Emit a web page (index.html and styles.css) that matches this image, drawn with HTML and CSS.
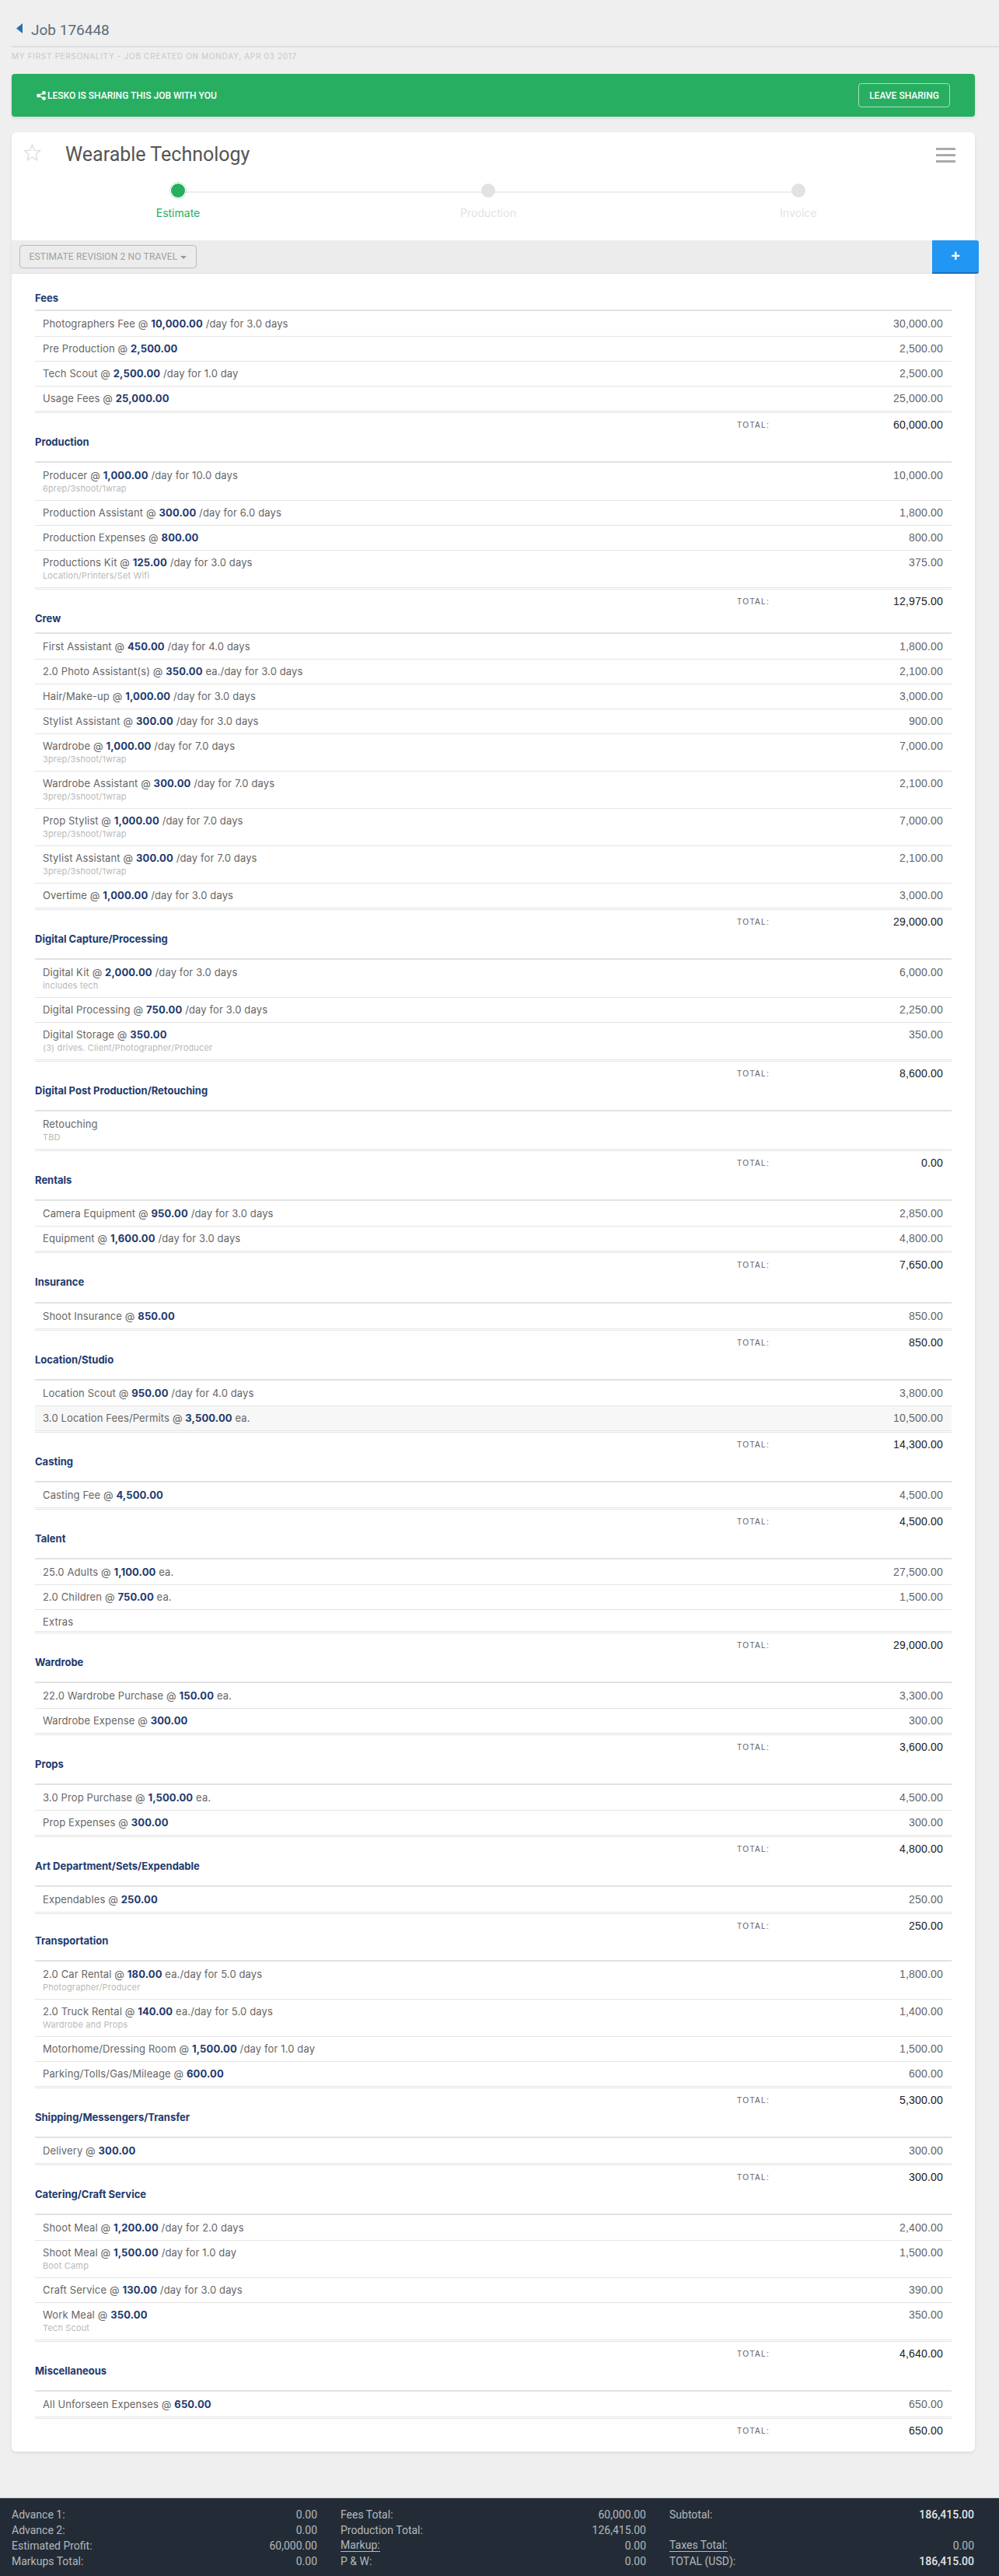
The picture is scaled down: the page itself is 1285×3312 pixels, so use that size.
FILE: index.html
```html
<!DOCTYPE html>
<html lang="en">
  <head>
    <meta charset="UTF-8" />
    <title>Job 176448</title>
    <link rel="stylesheet" href="styles.css">
  </head>
  <body>
    <div class="job-head">
      <svg class="back-arrow" width="8" height="13" viewBox="0 0 8 13"><path d="M8 0 L0 6.5 L8 13 Z" /></svg>
      <span class="job-number">Job 176448</span>
    </div>
    <div class="job-sub">My First Personality - Job created on Monday, Apr 03 2017</div>

    <div class="share-banner">
      <div class="share-text">
        <svg width="12" height="12" viewBox="0 0 12 12"><circle cx="2.5" cy="6" r="2.4" /><circle cx="9.5" cy="2.4" r="2.4" /><circle cx="9.5" cy="9.6" r="2.4" /><path d="M2.5 6 L9.5 2.4 M2.5 6 L9.5 9.6" stroke="#fff" stroke-width="1.4" /></svg>
        <span>LESKO IS SHARING THIS JOB WITH YOU</span>
      </div>
      <button type="button" class="leave-btn">LEAVE SHARING</button>
    </div>

    <div class="card">
      <div class="card-title">
        <svg class="star" width="23" height="22" viewBox="0 0 25 24"><path d="M12.5 1.5 L15.7 9 L23.6 9.6 L17.5 14.8 L19.4 22.6 L12.5 18.4 L5.6 22.6 L7.5 14.8 L1.4 9.6 L9.3 9 Z" /></svg>
        <h1>Wearable Technology</h1>
        <div class="burger"><span></span><span></span><span></span></div>
      </div>

      <div class="steps">
        <div class="step active"><i></i><span>Estimate</span></div>
        <div class="step"><i></i><span>Production</span></div>
        <div class="step"><i></i><span>Invoice</span></div>
      </div>

      <div class="toolbar">
        <button type="button" class="rev-btn">ESTIMATE REVISION 2 NO TRAVEL <b></b></button>
        <button type="button" class="add-btn">+</button>
      </div>

      <div class="estimate">
        <div class="cat cat-first">Fees</div>
        <div class="rows">
          <div class="row"><div class="desc">Photographers Fee @ <b>10,000.00</b> /day for 3.0 days</div><div class="amt">30,000.00</div></div>
          <div class="row"><div class="desc">Pre Production @ <b>2,500.00</b></div><div class="amt">2,500.00</div></div>
          <div class="row"><div class="desc">Tech Scout @ <b>2,500.00</b> /day for 1.0 day</div><div class="amt">2,500.00</div></div>
          <div class="row"><div class="desc">Usage Fees @ <b>25,000.00</b></div><div class="amt">25,000.00</div></div>
        </div>
        <div class="total"><span>TOTAL:</span><strong>60,000.00</strong></div>

        <div class="cat">Production</div>
        <div class="rows">
          <div class="row has-note"><div class="desc">Producer @ <b>1,000.00</b> /day for 10.0 days<small>6prep/3shoot/1wrap</small></div><div class="amt">10,000.00</div></div>
          <div class="row"><div class="desc">Production Assistant @ <b>300.00</b> /day for 6.0 days</div><div class="amt">1,800.00</div></div>
          <div class="row"><div class="desc">Production Expenses @ <b>800.00</b></div><div class="amt">800.00</div></div>
          <div class="row has-note"><div class="desc">Productions Kit @ <b>125.00</b> /day for 3.0 days<small>Location/Printers/Set Wifi</small></div><div class="amt">375.00</div></div>
        </div>
        <div class="total"><span>TOTAL:</span><strong>12,975.00</strong></div>

        <div class="cat cat-short">Crew</div>
        <div class="rows">
          <div class="row"><div class="desc">First Assistant @ <b>450.00</b> /day for 4.0 days</div><div class="amt">1,800.00</div></div>
          <div class="row"><div class="desc">2.0 Photo Assistant(s) @ <b>350.00</b> ea./day for 3.0 days</div><div class="amt">2,100.00</div></div>
          <div class="row"><div class="desc">Hair/Make-up @ <b>1,000.00</b> /day for 3.0 days</div><div class="amt">3,000.00</div></div>
          <div class="row"><div class="desc">Stylist Assistant @ <b>300.00</b> /day for 3.0 days</div><div class="amt">900.00</div></div>
          <div class="row has-note"><div class="desc">Wardrobe @ <b>1,000.00</b> /day for 7.0 days<small>3prep/3shoot/1wrap</small></div><div class="amt">7,000.00</div></div>
          <div class="row has-note"><div class="desc">Wardrobe Assistant @ <b>300.00</b> /day for 7.0 days<small>3prep/3shoot/1wrap</small></div><div class="amt">2,100.00</div></div>
          <div class="row has-note"><div class="desc">Prop Stylist @ <b>1,000.00</b> /day for 7.0 days<small>3prep/3shoot/1wrap</small></div><div class="amt">7,000.00</div></div>
          <div class="row has-note"><div class="desc">Stylist Assistant @ <b>300.00</b> /day for 7.0 days<small>3prep/3shoot/1wrap</small></div><div class="amt">2,100.00</div></div>
          <div class="row"><div class="desc">Overtime @ <b>1,000.00</b> /day for 3.0 days</div><div class="amt">3,000.00</div></div>
        </div>
        <div class="total"><span>TOTAL:</span><strong>29,000.00</strong></div>

        <div class="cat">Digital Capture/Processing</div>
        <div class="rows">
          <div class="row has-note"><div class="desc">Digital Kit @ <b>2,000.00</b> /day for 3.0 days<small>includes tech</small></div><div class="amt">6,000.00</div></div>
          <div class="row"><div class="desc">Digital Processing @ <b>750.00</b> /day for 3.0 days</div><div class="amt">2,250.00</div></div>
          <div class="row has-note"><div class="desc">Digital Storage @ <b>350.00</b><small>(3) drives. Client/Photographer/Producer</small></div><div class="amt">350.00</div></div>
        </div>
        <div class="total"><span>TOTAL:</span><strong>8,600.00</strong></div>

        <div class="cat">Digital Post Production/Retouching</div>
        <div class="rows">
          <div class="row has-note"><div class="desc">Retouching<small>TBD</small></div></div>
        </div>
        <div class="total"><span>TOTAL:</span><strong>0.00</strong></div>

        <div class="cat">Rentals</div>
        <div class="rows">
          <div class="row"><div class="desc">Camera Equipment @ <b>950.00</b> /day for 3.0 days</div><div class="amt">2,850.00</div></div>
          <div class="row"><div class="desc">Equipment @ <b>1,600.00</b> /day for 3.0 days</div><div class="amt">4,800.00</div></div>
        </div>
        <div class="total"><span>TOTAL:</span><strong>7,650.00</strong></div>

        <div class="cat cat-tall">Insurance</div>
        <div class="rows">
          <div class="row"><div class="desc">Shoot Insurance @ <b>850.00</b></div><div class="amt">850.00</div></div>
        </div>
        <div class="total"><span>TOTAL:</span><strong>850.00</strong></div>

        <div class="cat">Location/Studio</div>
        <div class="rows">
          <div class="row"><div class="desc">Location Scout @ <b>950.00</b> /day for 4.0 days</div><div class="amt">3,800.00</div></div>
          <div class="row shaded"><div class="desc">3.0 Location Fees/Permits @ <b>3,500.00</b> ea.</div><div class="amt">10,500.00</div></div>
        </div>
        <div class="total"><span>TOTAL:</span><strong>14,300.00</strong></div>

        <div class="cat">Casting</div>
        <div class="rows">
          <div class="row"><div class="desc">Casting Fee @ <b>4,500.00</b></div><div class="amt">4,500.00</div></div>
        </div>
        <div class="total"><span>TOTAL:</span><strong>4,500.00</strong></div>

        <div class="cat">Talent</div>
        <div class="rows">
          <div class="row"><div class="desc">25.0 Adults @ <b>1,100.00</b> ea.</div><div class="amt">27,500.00</div></div>
          <div class="row"><div class="desc">2.0 Children @ <b>750.00</b> ea.</div><div class="amt">1,500.00</div></div>
          <div class="row row-short"><div class="desc">Extras</div></div>
        </div>
        <div class="total"><span>TOTAL:</span><strong>29,000.00</strong></div>

        <div class="cat">Wardrobe</div>
        <div class="rows">
          <div class="row"><div class="desc">22.0 Wardrobe Purchase @ <b>150.00</b> ea.</div><div class="amt">3,300.00</div></div>
          <div class="row"><div class="desc">Wardrobe Expense @ <b>300.00</b></div><div class="amt">300.00</div></div>
        </div>
        <div class="total"><span>TOTAL:</span><strong>3,600.00</strong></div>

        <div class="cat">Props</div>
        <div class="rows">
          <div class="row"><div class="desc">3.0 Prop Purchase @ <b>1,500.00</b> ea.</div><div class="amt">4,500.00</div></div>
          <div class="row"><div class="desc">Prop Expenses @ <b>300.00</b></div><div class="amt">300.00</div></div>
        </div>
        <div class="total"><span>TOTAL:</span><strong>4,800.00</strong></div>

        <div class="cat">Art Department/Sets/Expendable</div>
        <div class="rows">
          <div class="row"><div class="desc">Expendables @ <b>250.00</b></div><div class="amt">250.00</div></div>
        </div>
        <div class="total"><span>TOTAL:</span><strong>250.00</strong></div>

        <div class="cat cat-up">Transportation</div>
        <div class="rows">
          <div class="row has-note"><div class="desc">2.0 Car Rental @ <b>180.00</b> ea./day for 5.0 days<small>Photographer/Producer</small></div><div class="amt">1,800.00</div></div>
          <div class="row has-note"><div class="desc">2.0 Truck Rental @ <b>140.00</b> ea./day for 5.0 days<small>Wardrobe and Props</small></div><div class="amt">1,400.00</div></div>
          <div class="row"><div class="desc">Motorhome/Dressing Room @ <b>1,500.00</b> /day for 1.0 day</div><div class="amt">1,500.00</div></div>
          <div class="row"><div class="desc">Parking/Tolls/Gas/Mileage @ <b>600.00</b></div><div class="amt">600.00</div></div>
        </div>
        <div class="total"><span>TOTAL:</span><strong>5,300.00</strong></div>

        <div class="cat">Shipping/Messengers/Transfer</div>
        <div class="rows">
          <div class="row"><div class="desc">Delivery @ <b>300.00</b></div><div class="amt">300.00</div></div>
        </div>
        <div class="total"><span>TOTAL:</span><strong>300.00</strong></div>

        <div class="cat">Catering/Craft Service</div>
        <div class="rows">
          <div class="row"><div class="desc">Shoot Meal @ <b>1,200.00</b> /day for 2.0 days</div><div class="amt">2,400.00</div></div>
          <div class="row has-note"><div class="desc">Shoot Meal @ <b>1,500.00</b> /day for 1.0 day<small>Boot Camp</small></div><div class="amt">1,500.00</div></div>
          <div class="row"><div class="desc">Craft Service @ <b>130.00</b> /day for 3.0 days</div><div class="amt">390.00</div></div>
          <div class="row has-note"><div class="desc">Work Meal @ <b>350.00</b><small>Tech Scout</small></div><div class="amt">350.00</div></div>
        </div>
        <div class="total"><span>TOTAL:</span><strong>4,640.00</strong></div>

        <div class="cat">Miscellaneous</div>
        <div class="rows">
          <div class="row"><div class="desc">All Unforseen Expenses @ <b>650.00</b></div><div class="amt">650.00</div></div>
        </div>
        <div class="total total-last"><span>TOTAL:</span><strong>650.00</strong></div>
      </div>
    </div>

    <div class="summary">
      <div class="summary-col">
        <div class="sum-row"><span>Advance 1:</span><span>0.00</span></div>
        <div class="sum-row"><span>Advance 2:</span><span>0.00</span></div>
        <div class="sum-row"><span>Estimated Profit:</span><span>60,000.00</span></div>
        <div class="sum-row"><span>Markups Total:</span><span>0.00</span></div>
      </div>
      <div class="summary-col">
        <div class="sum-row"><span>Fees Total:</span><span>60,000.00</span></div>
        <div class="sum-row"><span>Production Total:</span><span>126,415.00</span></div>
        <div class="sum-row"><span class="link">Markup:</span><span>0.00</span></div>
        <div class="sum-row"><span>P &amp; W:</span><span>0.00</span></div>
      </div>
      <div class="summary-col">
        <div class="sum-row"><span>Subtotal:</span><span class="strong">186,415.00</span></div>
        <div class="sum-row"></div>
        <div class="sum-row"><span class="link">Taxes Total:</span><span>0.00</span></div>
        <div class="sum-row"><span>TOTAL (USD):</span><span class="strong">186,415.00</span></div>
      </div>
    </div>
  </body>
</html>
```

FILE: styles.css
```css
* {
  padding: 0;
  margin: 0;
  box-sizing: border-box;
}

body {
  background-color: #efefef;
  font-family: "Inter", "Liberation Sans", sans-serif;
  color: #666;
  font-size: 13px;
}

.job-head {
  margin-left: 15px;
  height: 61px;
  padding-top: 29px;
  padding-left: 6px;
  display: flex;
  align-items: flex-start;
  border-bottom: 2px solid #ddd;
}

.back-arrow {
  margin-top: 1px;
  fill: #2a6db5;
}

.job-number {
  margin-left: 11px;
  font-family: "Roboto", sans-serif;
  font-size: 19px;
  line-height: 20px;
  color: #5d6b78;
}

.job-sub {
  margin-left: 15px;
  margin-top: 5px;
  height: 29px;
  line-height: 12px;
  font-size: 10px;
  letter-spacing: 0.7px;
  text-transform: uppercase;
  color: #c8c8c8;
}

.share-banner {
  margin: 0 31px 20px 15px;
  height: 55px;
  padding: 0 32px;
  display: flex;
  justify-content: space-between;
  align-items: center;
  background-color: #27ae60;
  border-radius: 4px;
  box-shadow: 0 2px 4px rgba(0, 0, 0, 0.1);
  color: #fff;
}

.share-text {
  display: flex;
  align-items: center;
  gap: 2px;
  font-family: "Roboto", sans-serif;
  font-size: 12px;
  font-weight: 500;
}

.share-text svg {
  fill: #fff;
}

.leave-btn {
  width: 118px;
  height: 31px;
  background: transparent;
  border: 1px solid rgba(255, 255, 255, 0.6);
  border-radius: 4px;
  color: #fff;
  font-family: "Roboto", sans-serif;
  font-size: 12px;
  font-weight: 500;
}

.card {
  margin: 0 31px 59px 15px;
  background-color: #fff;
  border-radius: 6px;
  box-shadow: 0 2px 4px rgba(0, 0, 0, 0.08);
}

.card-title {
  height: 65px;
  padding: 15px 25px 0 15px;
  display: flex;
  align-items: flex-start;
}

.star {
  fill: none;
  stroke: #dedede;
  stroke-width: 1.5;
}

.card-title h1 {
  margin-left: 31px;
  font-family: "Roboto", sans-serif;
  font-size: 25px;
  font-weight: 400;
  line-height: 28px;
  color: #555;
}

.burger {
  margin-left: auto;
  margin-top: 5px;
  width: 25px;
  display: flex;
  flex-direction: column;
  gap: 5px;
}

.burger span {
  height: 3px;
  background-color: #aaa;
}

.steps {
  height: 74px;
  display: flex;
  justify-content: space-between;
  position: relative;
  padding-left: 174px;
  padding-right: 187px;
}

/* line that runs behind the step dots */
.steps::before {
  content: "";
  position: absolute;
  left: 214px;
  right: 227px;
  top: 11px;
  height: 2px;
  background-color: #eee;
}

.step {
  width: 80px;
  display: flex;
  flex-direction: column;
  align-items: center;
  position: relative;
}

.step i {
  width: 18px;
  height: 18px;
  margin-top: 1px;
  border-radius: 50%;
  background-color: #e2e2e2;
}

.step span {
  margin-top: 11px;
  font-size: 14px;
  line-height: 18px;
  color: #e3e3e3;
}

.step.active i {
  background-color: #27ae60;
  outline: 1px dotted #8fd0a8;
  outline-offset: 1px;
}

.step.active span {
  color: #27ae60;
}

.toolbar {
  height: 43px;
  padding: 6px 10px;
  background-color: #ececec;
  border-bottom: 1px solid #e2e2e2;
  position: relative;
}

.rev-btn {
  width: 228px;
  height: 30px;
  background: transparent;
  border: 1px solid #bbb;
  border-radius: 4px;
  font-family: "Roboto", sans-serif;
  font-size: 12px;
  letter-spacing: 0.15px;
  color: #a0a0a0;
}

.rev-btn b {
  display: inline-block;
  margin-left: 1px;
  vertical-align: middle;
  border-left: 4px solid transparent;
  border-right: 4px solid transparent;
  border-top: 4px solid #999;
}

.add-btn {
  position: absolute;
  top: 0;
  right: -5px;
  width: 60px;
  height: 43px;
  border: none;
  border-bottom: 2px solid #1a6fb8;
  border-radius: 0 3px 3px 0;
  background-color: #2196f3;
  color: #fff;
  font-family: "Liberation Sans", sans-serif;
  font-size: 20px;
  font-weight: bold;
}

.estimate {
  padding: 25px 30px 0 30px;
}

.cat {
  height: 31px;
  line-height: 12px;
  font-size: 13px;
  font-weight: 700;
  color: #1e3a6e;
}

.cat-first {
  height: 21px;
}

.cat-short {
  height: 24px;
}

.cat-tall {
  height: 32px;
}

.cat-up {
  margin-top: -3px;
}

.rows {
  border-top: 2px solid #e2e2e2;
  padding-top: 1px;
}

.row {
  height: 32px;
  padding: 7px 11px 0 10px;
  display: flex;
  justify-content: space-between;
  align-items: flex-start;
  border-bottom: 1px solid #e5e5e5;
}

.row.has-note {
  height: 48px;
}

.row.row-short {
  height: 28px;
}

.row.shaded {
  background-color: #f7f7f7;
}

.desc {
  line-height: 16px;
  letter-spacing: 0.13px;
}

.desc b {
  font-weight: 700;
  color: #1e3a6e;
}

.desc small {
  display: block;
  margin-top: 2px;
  font-size: 11px;
  line-height: 14px;
  letter-spacing: 0.15px;
  color: #b9b9b9;
}

.amt {
  font-family: "Liberation Sans", sans-serif;
  font-size: 14px;
  line-height: 16px;
  letter-spacing: 0.2px;
  color: #666;
}

.total {
  margin-top: 1px;
  height: 32px;
  padding: 8px 11px 0 0;
  display: flex;
  justify-content: flex-end;
  border-top: 1px solid #e5e5e5;
  font-family: "Liberation Sans", sans-serif;
}

.total span {
  font-size: 10px;
  line-height: 16px;
  letter-spacing: 1.3px;
  color: #666;
}

.total strong {
  width: 223px;
  text-align: right;
  font-size: 14px;
  font-weight: 400;
  line-height: 15px;
  letter-spacing: 0.2px;
  color: #222;
}

.total-last {
  height: 43px;
}

.summary {
  height: 101px;
  padding: 11px 32px 0 15px;
  display: grid;
  grid-template-columns: 393px 393px 392px;
  gap: 30px;
  background-color: #232c36;
  border-top: 1px solid #ccc;
  font-family: "Roboto", sans-serif;
  font-size: 14px;
  color: #b4b8bc;
}

.sum-row {
  height: 20px;
  line-height: 20px;
  display: flex;
  justify-content: space-between;
}

.sum-row .link {
  border-bottom: 1px solid #b4b8bc;
  height: 18px;
  line-height: 19px;
}

.sum-row .strong {
  color: #e2e4e6;
  font-weight: 500;
}
```
